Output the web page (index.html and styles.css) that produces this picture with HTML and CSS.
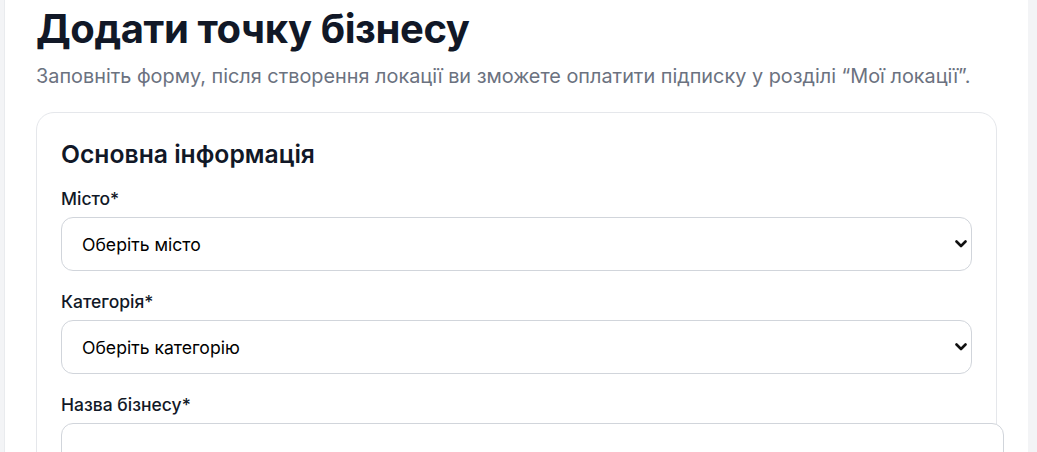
FILE: index.html
```html
<!DOCTYPE html>
<html lang="uk">
<head>
<meta charset="utf-8">
<title>Додати точку бізнесу</title>
<link rel="stylesheet" href="styles.css">
</head>
<body>
<main class="panel">
  <h1 class="title">Додати точку бізнесу</h1>
  <p class="subtitle">Заповніть форму, після створення локації ви зможете оплатити підписку у розділі “Мої локації”.</p>
  <section class="card">
    <h2 class="card-title">Основна інформація</h2>
    <div class="field">
      <label class="label" for="city">Місто*</label>
      <div class="select-wrap">
        <select class="select" id="city">
          <option>Оберіть місто</option>
        </select>
        <svg class="chevron" width="12" height="8" viewBox="0 0 12 8" aria-hidden="true"><path d="M1.5 1.5 L6 6 L10.5 1.5" fill="none" stroke="#111111" stroke-width="2.6" stroke-linecap="round" stroke-linejoin="round"/></svg>
      </div>
    </div>
    <div class="field">
      <label class="label" for="cat">Категорія*</label>
      <div class="select-wrap">
        <select class="select" id="cat">
          <option>Оберіть категорію</option>
        </select>
        <svg class="chevron" width="12" height="8" viewBox="0 0 12 8" aria-hidden="true"><path d="M1.5 1.5 L6 6 L10.5 1.5" fill="none" stroke="#111111" stroke-width="2.6" stroke-linecap="round" stroke-linejoin="round"/></svg>
      </div>
    </div>
    <div class="field">
      <label class="label" for="name">Назва бізнесу*</label>
      <input class="input" id="name" type="text">
    </div>
  </section>
</main>
</body>
</html>
```

FILE: styles.css
```css
html, body {
  margin: 0;
  padding: 0;
  height: 100%;
}
body {
  background: #f3f4f6;
  font-family: Inter, "Noto Sans", sans-serif;
  color: #111827;
  overflow: hidden;
}
.panel {
  box-sizing: border-box;
  margin-left: 4px;
  width: 1024px;
  min-height: 100%;
  background: #ffffff;
  border-left: 1px solid #e9ebee;
  padding: 5px 31px 0 31px;
}
.title {
  margin: 0;
  font-size: 40px;
  line-height: 48px;
  font-weight: 700;
  color: #111827;
  letter-spacing: -0.4px;
}
.subtitle {
  margin: 9px 0 0 0;
  font-size: 19.85px;
  line-height: 28px;
  color: #6b7280;
}
.card {
  margin-top: 22px;
  border: 1px solid #e5e7eb;
  border-radius: 18px;
  padding: 25px 24px 24px 24px;
  width: 911px;
  box-sizing: content-box;
}
.card-title {
  margin: 0 0 17px 0;
  font-size: 24.7px;
  line-height: 32px;
  font-weight: 600;
  color: #111827;
}
.field {
  display: flex;
  flex-direction: column;
  margin-bottom: 19px;
}
.label {
  font-size: 17.5px;
  line-height: 24px;
  font-weight: 500;
  color: #111827;
  margin-bottom: 6px;
}
.select-wrap {
  position: relative;
  display: flex;
}
.select {
  flex: 1;
  height: 54px;
  -webkit-appearance: none;
  appearance: none;
  border: 1px solid #d1d5db;
  border-radius: 12px;
  background-color: #ffffff;
  padding: 0 30px 0 20px;
  font-family: Inter, "Noto Sans", sans-serif;
  font-size: 17.6px;
  color: #000000;
}
.chevron {
  position: absolute;
  right: 5px;
  top: 50%;
  margin-top: -4px;
  pointer-events: none;
}
.input {
  height: 54px;
  box-sizing: border-box;
  width: calc(100% + 32px);
  border: 1px solid #d1d5db;
  border-radius: 12px;
  background: #ffffff;
  padding: 0 15px;
  font-family: Inter, "Noto Sans", sans-serif;
  font-size: 16px;
}
```
